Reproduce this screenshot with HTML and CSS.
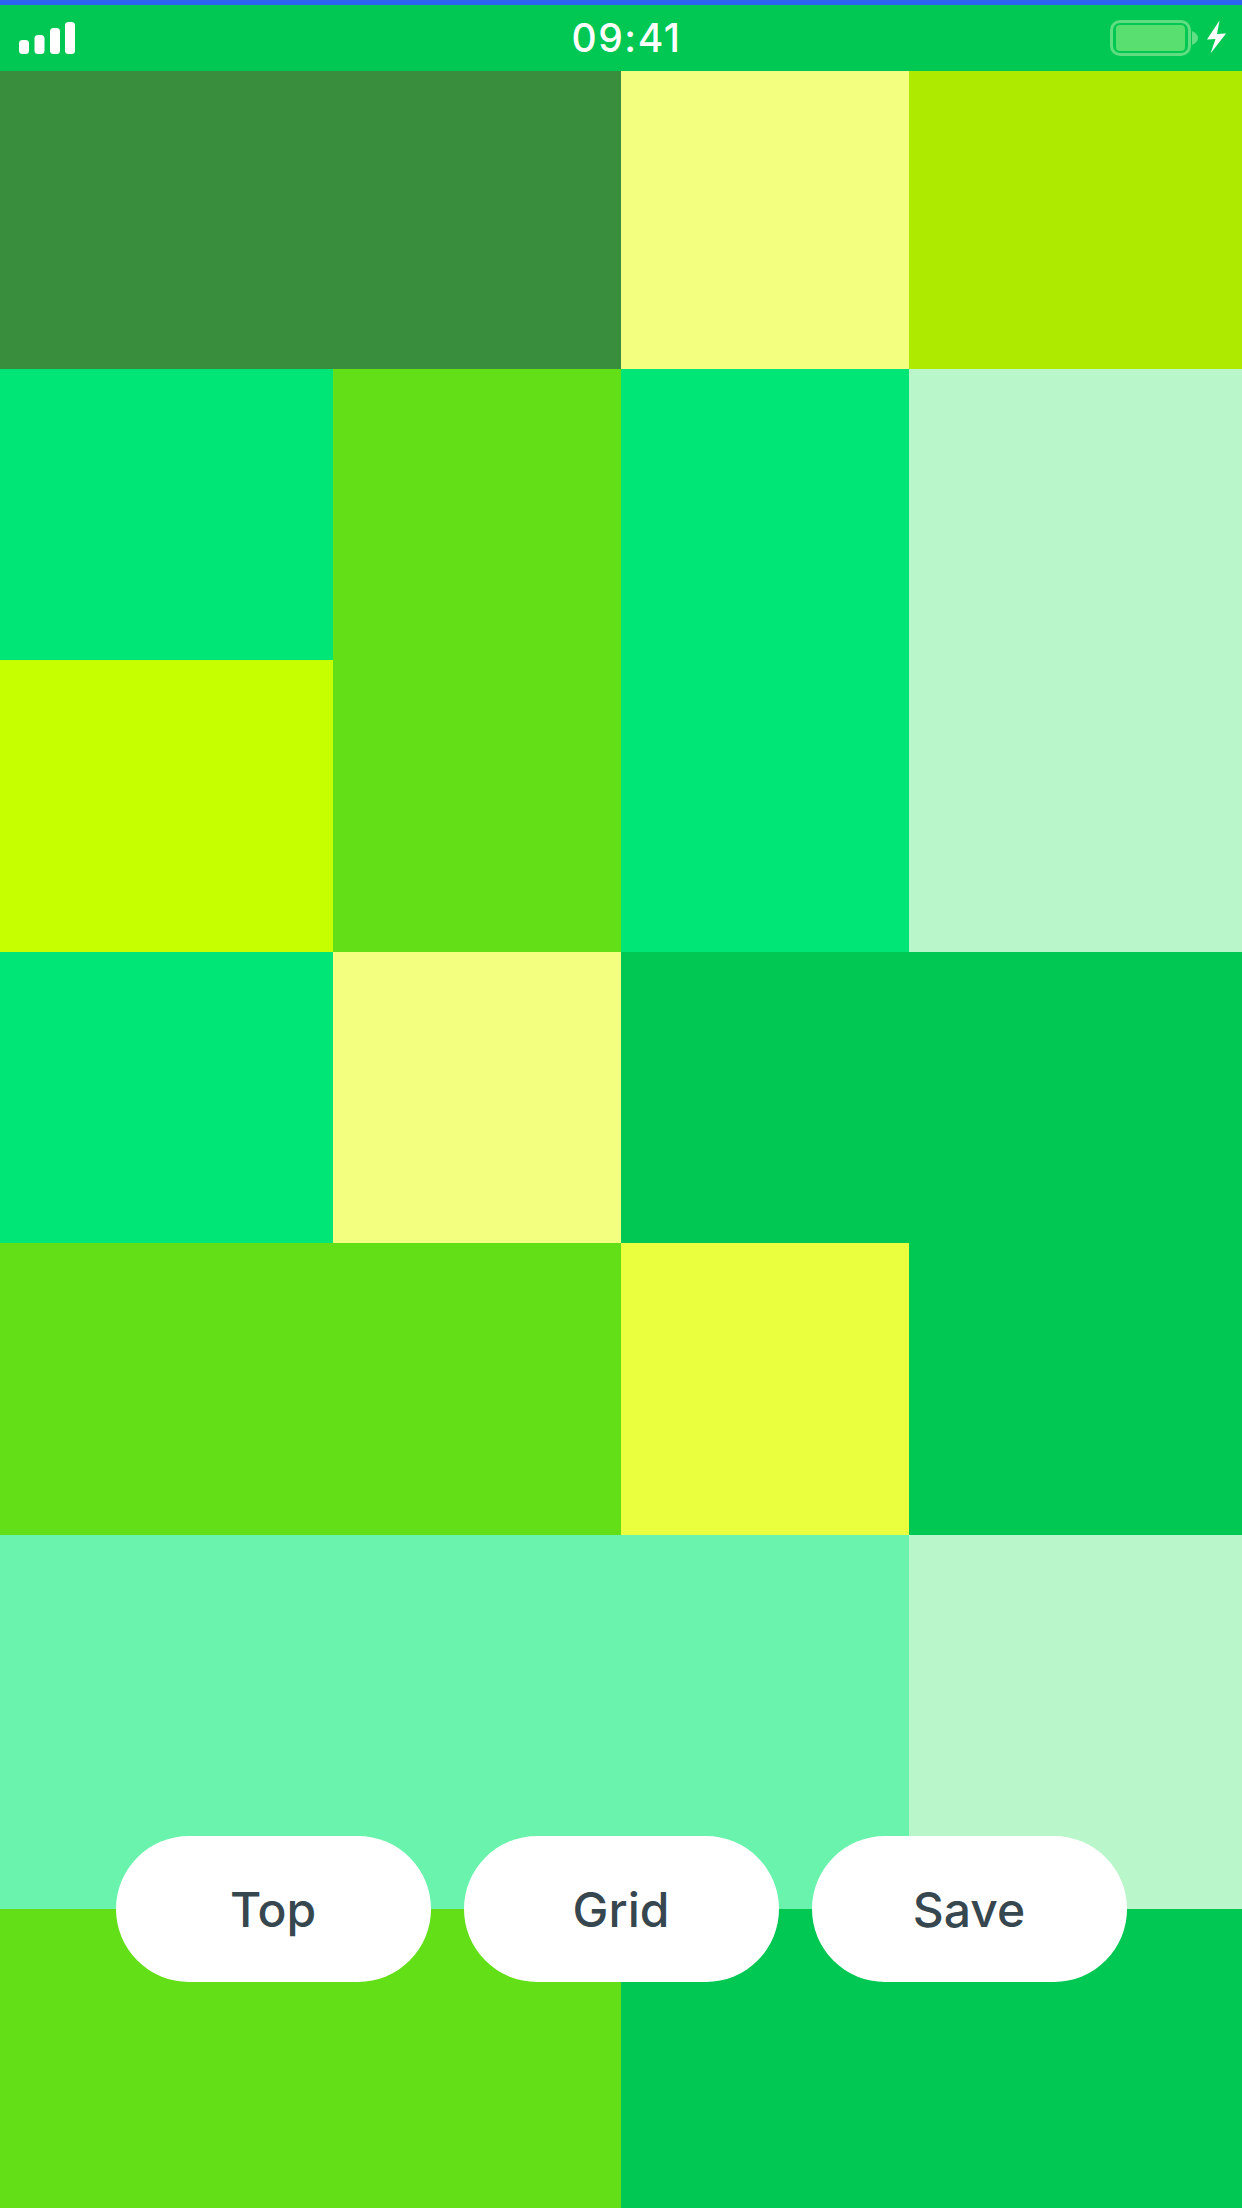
FILE: index.html
```html
<!DOCTYPE html>
<html lang="en">
<head>
<meta charset="utf-8">
<title>Grid</title>
<link rel="stylesheet" href="styles.css">
</head>
<body>
<div class="app">
  <header class="status">
    <svg class="signal" width="56" height="32" viewBox="0 0 56 32" aria-hidden="true">
      <rect x="0" y="18" width="10" height="14" rx="3.5"/>
      <rect x="15.5" y="13" width="10" height="19" rx="3.5"/>
      <rect x="31" y="6" width="10" height="26" rx="3.5"/>
      <rect x="46" y="0" width="10" height="32" rx="3.5"/>
    </svg>
    <div class="time">09:41</div>
    <svg class="power" width="116" height="36" viewBox="0 0 116 36" aria-hidden="true">
      <rect class="b-line" x="1.5" y="1.5" width="78" height="33" rx="8.5"/>
      <rect class="b-fill" x="6" y="5" width="69" height="26" rx="4"/>
      <path class="b-nub" d="M82 11 C86 13 88 15 88 18 C88 21 86 23 82 25 Z"/>
      <path class="bolt" d="M109.5 0.5 L97 19.5 L105.5 19 L100.5 33.5 L116 13.5 L107 14 Z"/>
    </svg>
  </header>
  <main class="mosaic">
    <div class="cell a1 moss"></div>
    <div class="cell a2 pale-yellow"></div>
    <div class="cell a3 olive-lime"></div>
    <div class="cell b1 spring"></div>
    <div class="cell b2 leaf"></div>
    <div class="cell b3 spring"></div>
    <div class="cell b4 mint"></div>
    <div class="cell c1 lime"></div>
    <div class="cell d1 spring"></div>
    <div class="cell d2 pale-yellow"></div>
    <div class="cell d3 green"></div>
    <div class="cell e1 leaf"></div>
    <div class="cell e2 yellow"></div>
    <div class="cell e3 green"></div>
    <div class="cell f1 aqua"></div>
    <div class="cell f2 mint"></div>
    <div class="cell g1 leaf"></div>
    <div class="cell g2 green"></div>
  </main>
  <nav class="actions">
    <button class="pill" type="button">Top</button>
    <button class="pill" type="button">Grid</button>
    <button class="pill" type="button">Save</button>
  </nav>
</div>
</body>
</html>
```
FILE: styles.css
```css
* { box-sizing: border-box; }
html, body { margin: 0; padding: 0; }
body { width: 1242px; height: 2208px; overflow: hidden; font-family: Inter, "Liberation Sans", sans-serif; }
.app { position: relative; width: 1242px; height: 2208px; display: flex; flex-direction: column; }

.status {
  height: 71px;
  flex: none;
  border-top: 5px solid #2b62ee;
  background: #00c853;
  display: grid;
  grid-template-columns: 1fr auto 1fr;
  align-items: center;
  padding: 0 16px 0 19px;
  color: #fff;
}
.signal { fill: #fff; justify-self: start; margin-top: -1px; }
.power { justify-self: end; margin-top: -1px; }
.time { font-size: 39px; font-weight: 500; letter-spacing: 1.5px; line-height: 46px; transform: translateX(4px); }
.b-line { fill: none; stroke: #5fdd80; stroke-width: 3; }
.b-fill { fill: #58df70; }
.b-nub { fill: #62de84; }
.bolt { fill: #fff; }

.mosaic {
  flex: 1;
  display: grid;
  grid-template-columns: 333px 288px 288px 333px;
  grid-template-rows: 298px 291px 292px 291px 292px 374px 299px;
}
.a1 { grid-area: 1 / 1 / 2 / 3; }
.a2 { grid-area: 1 / 3 / 2 / 4; }
.a3 { grid-area: 1 / 4 / 2 / 5; }
.b1 { grid-area: 2 / 1 / 3 / 2; }
.b2 { grid-area: 2 / 2 / 4 / 3; }
.b3 { grid-area: 2 / 3 / 4 / 4; }
.b4 { grid-area: 2 / 4 / 4 / 5; }
.c1 { grid-area: 3 / 1 / 4 / 2; }
.d1 { grid-area: 4 / 1 / 5 / 2; }
.d2 { grid-area: 4 / 2 / 5 / 3; }
.d3 { grid-area: 4 / 3 / 5 / 5; }
.e1 { grid-area: 5 / 1 / 6 / 3; }
.e2 { grid-area: 5 / 3 / 6 / 4; }
.e3 { grid-area: 5 / 4 / 6 / 5; }
.f1 { grid-area: 6 / 1 / 7 / 4; }
.f2 { grid-area: 6 / 4 / 7 / 5; }
.g1 { grid-area: 7 / 1 / 8 / 3; }
.g2 { grid-area: 7 / 3 / 8 / 5; }

.moss { background: #388e3c; }
.pale-yellow { background: #f2ff7f; }
.olive-lime { background: #aeea00; }
.spring { background: #00e676; }
.leaf { background: #62df17; }
.mint { background: #b9f6ca; }
.lime { background: #c6ff00; }
.green { background: #00c853; }
.yellow { background: #eaff3e; }
.aqua { background: #69f3ad; }

.actions {
  position: absolute;
  left: 0;
  right: 0;
  top: 1836px;
  display: flex;
  justify-content: center;
  gap: 33px;
}
.pill {
  width: 315px;
  height: 146px;
  border: 0;
  border-radius: 73px;
  background: #fff;
  color: #37474f;
  font-family: inherit;
  font-size: 48px;
  font-weight: 500;
  padding: 0;
}
```
